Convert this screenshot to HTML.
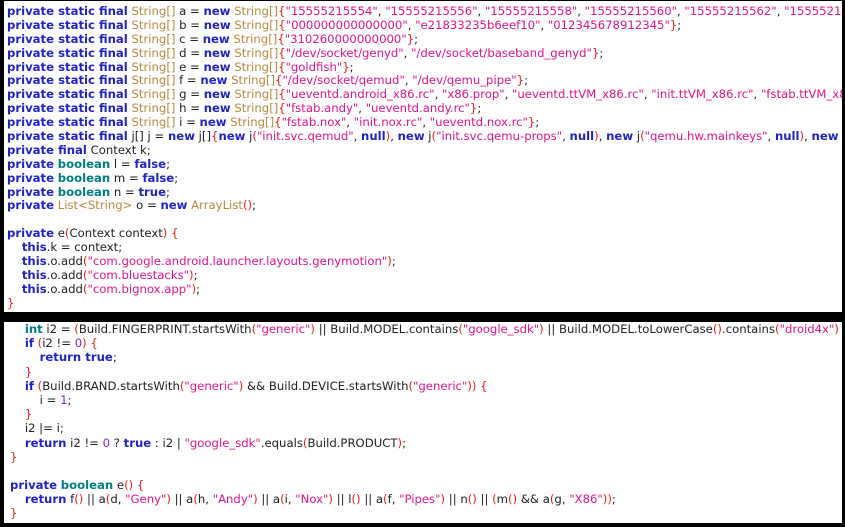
<!DOCTYPE html>
<html><head><meta charset="utf-8"><style>
html,body{margin:0;padding:0;background:#000;width:845px;height:527px;overflow:hidden}
.p{position:absolute;background:#fff;overflow:hidden;white-space:pre;font-family:"DejaVu Sans","Liberation Sans",sans-serif;font-size:11.66px;color:#222}
#t{left:4px;top:1px;width:838px;height:311px}
#b{left:4px;top:322px;width:838px;height:201px}
.k{color:#2222cc;font-weight:bold}
.b{color:#008080;font-weight:bold}
.t{color:#b98a3e}
.s{color:#e0158c}
.r{color:#e82020}
.n{color:#7a2fb0}
.l{display:block;height:13.9px;line-height:13.9px}
#b .l{height:14.2px;line-height:14.2px}
</style></head><body>
<div class="p" id="t"><div style="padding-left:3px;padding-top:4px"><span class="l"><span class="k">private static final</span> <span class="t">String[]</span> a = <span class="k">new</span> <span class="t">String[]</span><span class="r">{</span><span class="s">"15555215554"</span>, <span class="s">"15555215556"</span>, <span class="s">"15555215558"</span>, <span class="s">"15555215560"</span>, <span class="s">"15555215562"</span>, <span class="s">"15555215564"</span></span><span class="l"><span class="k">private static final</span> <span class="t">String[]</span> b = <span class="k">new</span> <span class="t">String[]</span><span class="r">{</span><span class="s">"000000000000000"</span>, <span class="s">"e21833235b6eef10"</span>, <span class="s">"012345678912345"</span><span class="r">}</span>;</span><span class="l"><span class="k">private static final</span> <span class="t">String[]</span> c = <span class="k">new</span> <span class="t">String[]</span><span class="r">{</span><span class="s">"310260000000000"</span><span class="r">}</span>;</span><span class="l"><span class="k">private static final</span> <span class="t">String[]</span> d = <span class="k">new</span> <span class="t">String[]</span><span class="r">{</span><span class="s">"/dev/socket/genyd"</span>, <span class="s">"/dev/socket/baseband_genyd"</span><span class="r">}</span>;</span><span class="l"><span class="k">private static final</span> <span class="t">String[]</span> e = <span class="k">new</span> <span class="t">String[]</span><span class="r">{</span><span class="s">"goldfish"</span><span class="r">}</span>;</span><span class="l"><span class="k">private static final</span> <span class="t">String[]</span> f = <span class="k">new</span> <span class="t">String[]</span><span class="r">{</span><span class="s">"/dev/socket/qemud"</span>, <span class="s">"/dev/qemu_pipe"</span><span class="r">}</span>;</span><span class="l"><span class="k">private static final</span> <span class="t">String[]</span> g = <span class="k">new</span> <span class="t">String[]</span><span class="r">{</span><span class="s">"ueventd.android_x86.rc"</span>, <span class="s">"x86.prop"</span>, <span class="s">"ueventd.ttVM_x86.rc"</span>, <span class="s">"init.ttVM_x86.rc"</span>, <span class="s">"fstab.ttVM_x86"</span>, <span class="s">"fstab</span></span><span class="l"><span class="k">private static final</span> <span class="t">String[]</span> h = <span class="k">new</span> <span class="t">String[]</span><span class="r">{</span><span class="s">"fstab.andy"</span>, <span class="s">"ueventd.andy.rc"</span><span class="r">}</span>;</span><span class="l"><span class="k">private static final</span> <span class="t">String[]</span> i = <span class="k">new</span> <span class="t">String[]</span><span class="r">{</span><span class="s">"fstab.nox"</span>, <span class="s">"init.nox.rc"</span>, <span class="s">"ueventd.nox.rc"</span><span class="r">}</span>;</span><span class="l"><span class="k">private static final</span> j[] j = <span class="k">new</span> j[]<span class="r">{</span><span class="k">new</span> j<span class="r">(</span><span class="s">"init.svc.qemud"</span>, <span class="k">null</span><span class="r">)</span>, <span class="k">new</span> j<span class="r">(</span><span class="s">"init.svc.qemu-props"</span>, <span class="k">null</span><span class="r">)</span>, <span class="k">new</span> j<span class="r">(</span><span class="s">"qemu.hw.mainkeys"</span>, <span class="k">null</span><span class="r">)</span>, <span class="k">new</span> j<span class="r">(</span><span class="s">"qemu</span></span><span class="l"><span class="k">private final</span> Context k;</span><span class="l"><span class="k">private</span> <span class="b">boolean</span> l = <span class="k">false</span>;</span><span class="l"><span class="k">private</span> <span class="b">boolean</span> m = <span class="k">false</span>;</span><span class="l"><span class="k">private</span> <span class="b">boolean</span> n = <span class="k">true</span>;</span><span class="l"><span class="k">private</span> <span class="t">List&lt;String&gt;</span> o = <span class="k">new</span> <span class="t">ArrayList</span><span class="r">()</span>;</span><span class="l"> </span><span class="l"><span class="k">private</span> e<span class="r">(</span>Context context<span class="r">)</span> <span class="r">{</span></span><span class="l">    <span class="k">this</span>.k = context;</span><span class="l">    <span class="k">this</span>.o.add<span class="r">(</span><span class="s">"com.google.android.launcher.layouts.genymotion"</span><span class="r">)</span>;</span><span class="l">    <span class="k">this</span>.o.add<span class="r">(</span><span class="s">"com.bluestacks"</span><span class="r">)</span>;</span><span class="l">    <span class="k">this</span>.o.add<span class="r">(</span><span class="s">"com.bignox.app"</span><span class="r">)</span>;</span><span class="l"><span class="r">}</span></span></div></div>
<div class="p" id="b"><div style="padding-left:6px;padding-top:0px"><span class="l">    <span class="b">int</span> i2 = <span class="r">(</span>Build.FINGERPRINT.startsWith<span class="r">(</span><span class="s">"generic"</span><span class="r">)</span> || Build.MODEL.contains<span class="r">(</span><span class="s">"google_sdk"</span><span class="r">)</span> || Build.MODEL.toLowerCase<span class="r">()</span>.contains<span class="r">(</span><span class="s">"droid4x"</span><span class="r">)</span></span><span class="l">    <span class="k">if</span> <span class="r">(</span>i2 != <span class="n">0</span><span class="r">)</span> <span class="r">{</span></span><span class="l">        <span class="k">return true</span>;</span><span class="l">    <span class="r">}</span></span><span class="l">    <span class="k">if</span> <span class="r">(</span>Build.BRAND.startsWith<span class="r">(</span><span class="s">"generic"</span><span class="r">)</span> &amp;&amp; Build.DEVICE.startsWith<span class="r">(</span><span class="s">"generic"</span><span class="r">))</span> <span class="r">{</span></span><span class="l">        i = <span class="n">1</span>;</span><span class="l">    <span class="r">}</span></span><span class="l">    i2 |= i;</span><span class="l">    <span class="k">return</span> i2 != <span class="n">0</span> ? <span class="k">true</span> : i2 | <span class="s">"google_sdk"</span>.equals<span class="r">(</span>Build.PRODUCT<span class="r">)</span>;</span><span class="l"><span class="r">}</span></span><span class="l"> </span><span class="l"><span class="k">private</span> <span class="b">boolean</span> e<span class="r">()</span> <span class="r">{</span></span><span class="l">    <span class="k">return</span> f<span class="r">()</span> || a<span class="r">(</span>d, <span class="s">"Geny"</span><span class="r">)</span> || a<span class="r">(</span>h, <span class="s">"Andy"</span><span class="r">)</span> || a<span class="r">(</span>i, <span class="s">"Nox"</span><span class="r">)</span> || l<span class="r">()</span> || a<span class="r">(</span>f, <span class="s">"Pipes"</span><span class="r">)</span> || n<span class="r">()</span> || <span class="r">(</span>m<span class="r">()</span> &amp;&amp; a<span class="r">(</span>g, <span class="s">"X86"</span><span class="r">))</span>;</span><span class="l"><span class="r">}</span></span></div></div>
</body></html>
